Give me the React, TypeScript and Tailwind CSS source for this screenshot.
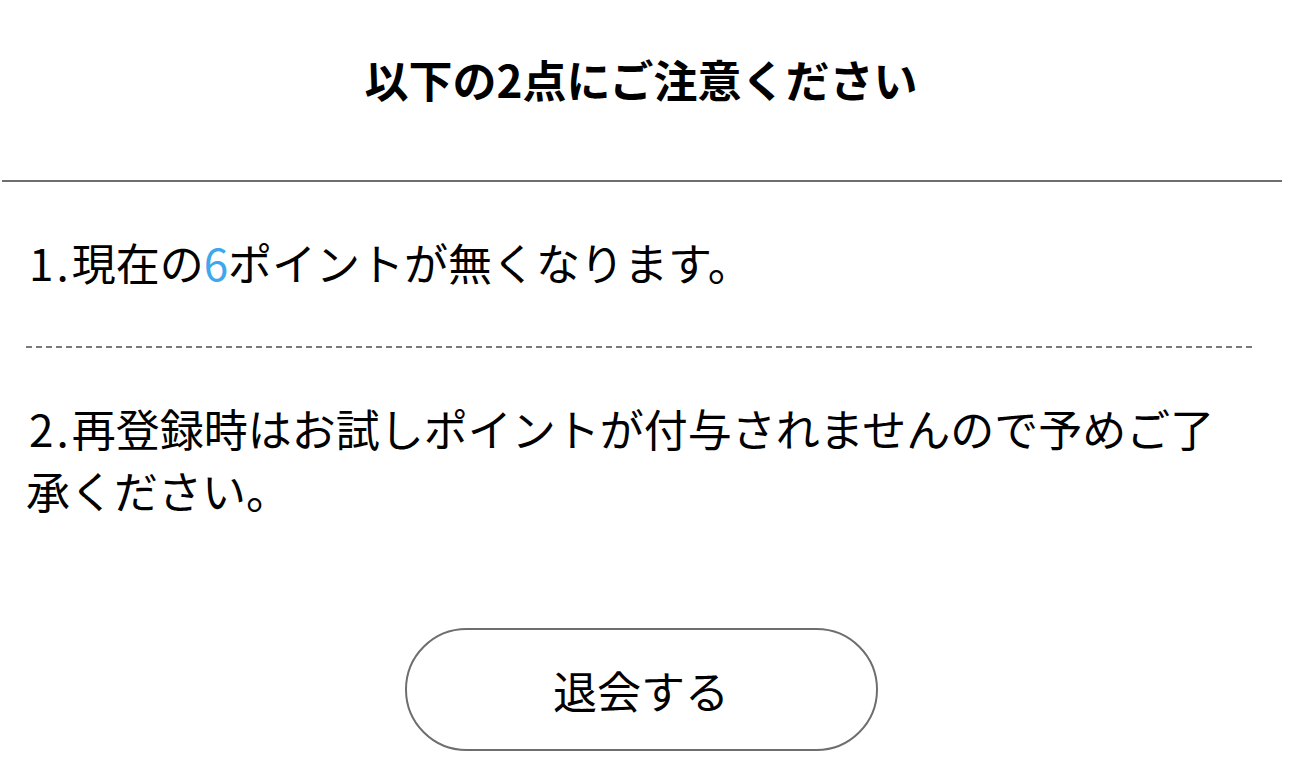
const notes = [
  {
    no: 1,
    body: (
      <>
        現在の<span className="text-[#3fa8ec]">6</span>ポイントが無くなります。
      </>
    ),
  },
  {
    no: 2,
    body: <>再登録時はお試しポイントが付与されませんので予めご了承ください。</>,
  },
];

export default function App() {
  return (
    <div
      className="min-h-screen bg-white text-black"
      style={{ fontFamily: '"Noto Sans CJK JP", "Noto Sans", sans-serif' }}
    >
      <div className="w-[1282px]">
        <h1 className="pt-[46px] pb-[68px] text-center text-[44px] font-bold leading-[66px]">
          以下の2点にご注意ください
        </h1>
        <div className="ml-[2px] h-[2px] bg-[#6e6e6e]" />

        <ul className="px-[26px]">
          {notes.map((note, i) => (
            <li key={note.no}>
              {i > 0 && (
                <div className="h-[2px] bg-[repeating-linear-gradient(to_right,#7a7a7a_0_6px,transparent_6px_10px)]" />
              )}
              <p
                className={
                  i === 0
                    ? "pt-[49px] pb-[53px] text-[44px] leading-[62px]"
                    : "pt-[49px] text-[44px] leading-[62px]"
                }
              >
                <span className="pl-[3px] tracking-[3px]">{note.no}.</span>
                {note.body}
              </p>
            </li>
          ))}
        </ul>

        <div className="mt-[107px] flex justify-center">
          <button
            type="button"
            className="flex h-[123px] w-[473px] items-center justify-center rounded-full border-2 border-[#6e6e6e] bg-white text-[44px]"
          >
            退会する
          </button>
        </div>
      </div>
    </div>
  );
}
